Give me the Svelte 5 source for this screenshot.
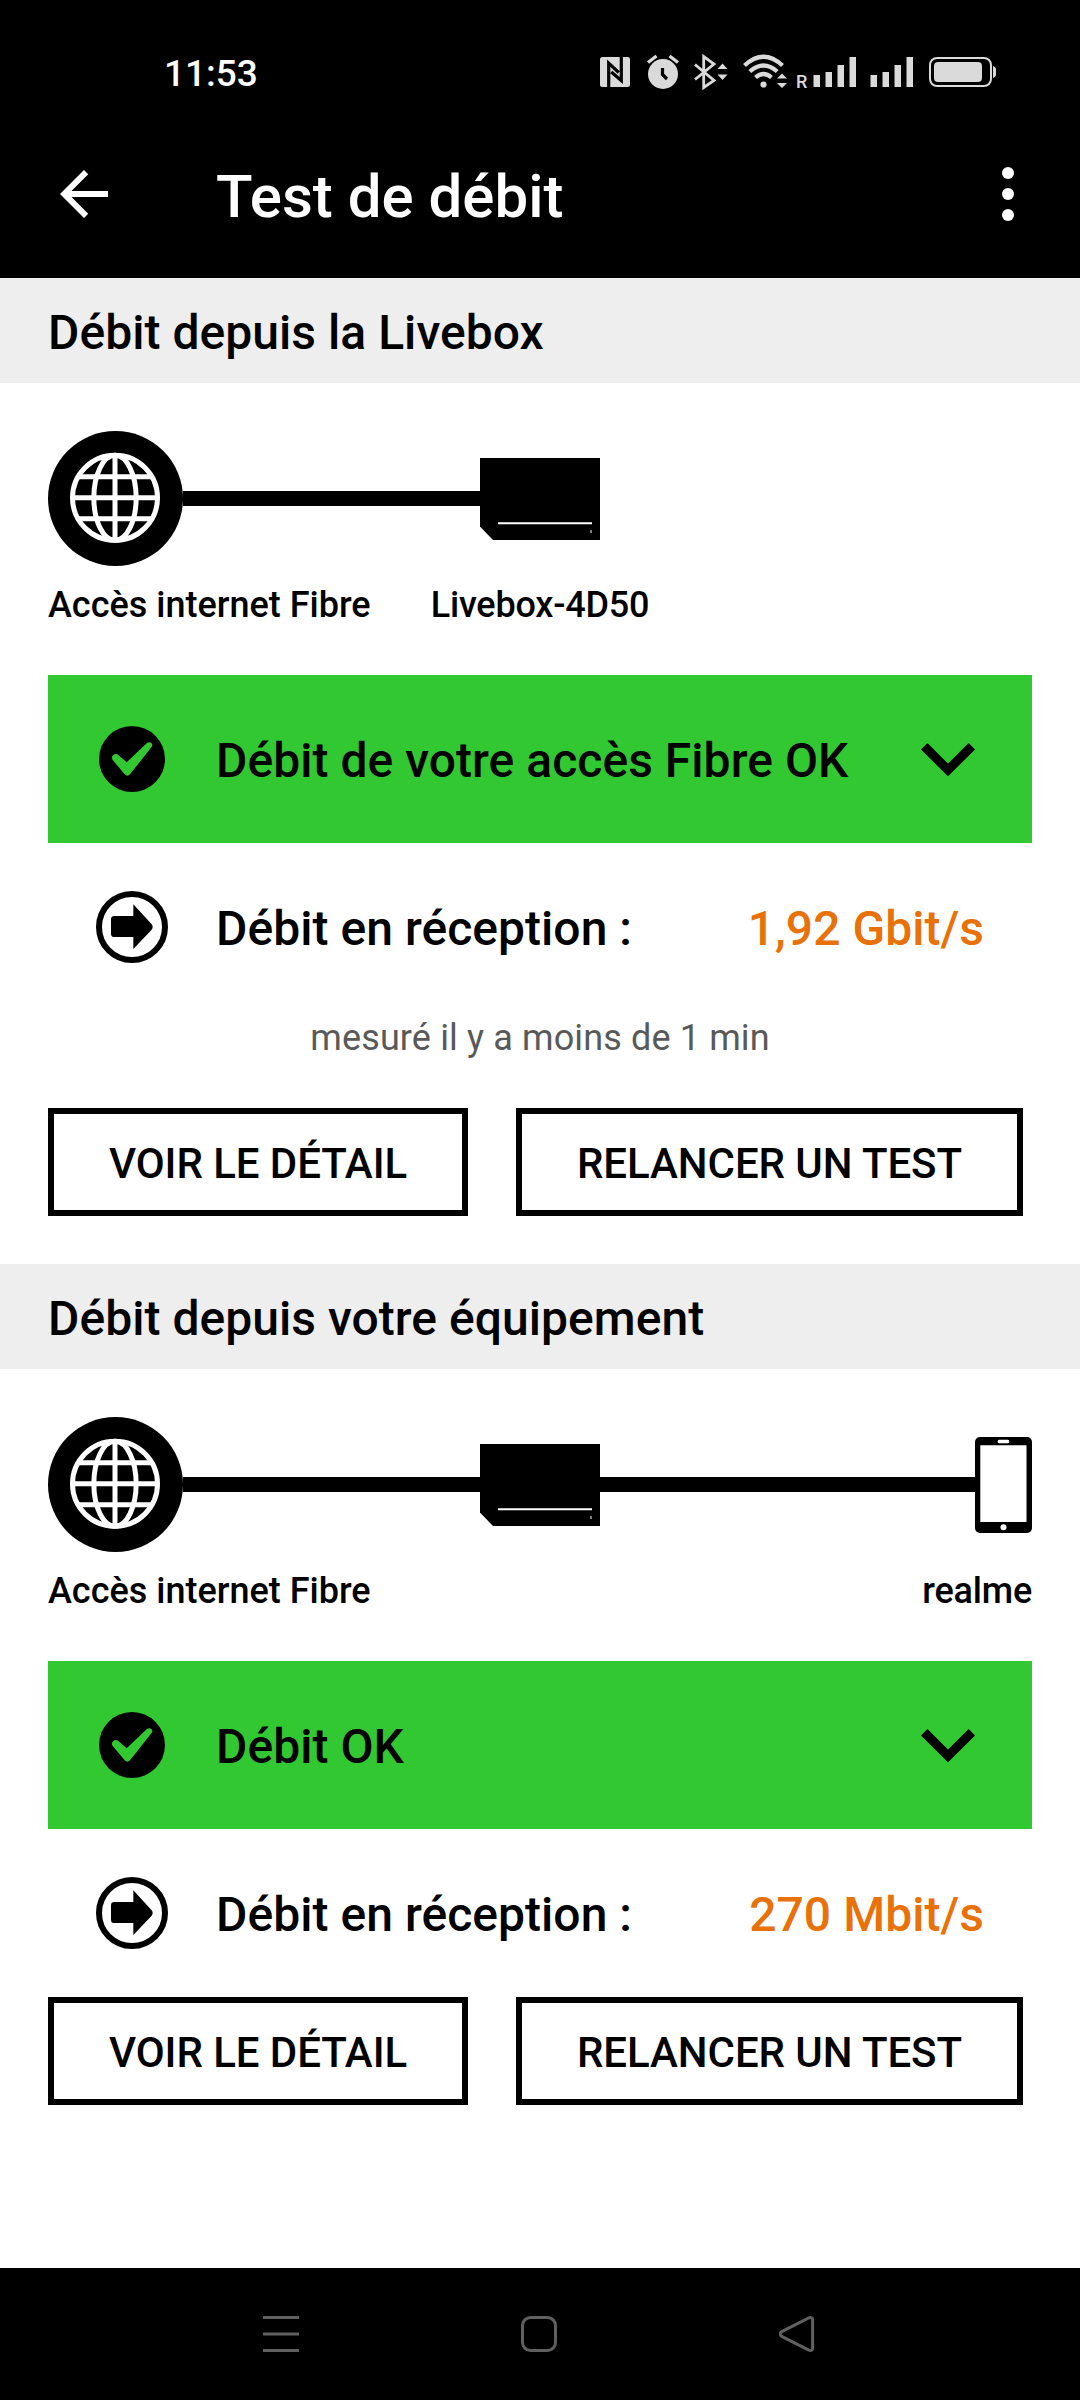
<script>
  const tests = [
    {
      title: 'Débit depuis la Livebox',
      box: 'Livebox-4D50',
      device: '',
      status: 'Débit de votre accès Fibre OK',
      speed: '1,92 Gbit/s',
      measured: 'mesuré il y a moins de 1 min'
    },
    {
      title: 'Débit depuis votre équipement',
      box: '',
      device: 'realme',
      status: 'Débit OK',
      speed: '270 Mbit/s',
      measured: ''
    }
  ];
</script>

<div class="screen">
  <header>
    <div class="status-bar">
      <span class="time">11:53</span>
      <div class="status-icons">
        <!-- nfc -->
        <svg width="44" height="40" viewBox="16 12 44 40">
          <rect x="20" y="17" width="30" height="30" rx="2.5" />
          <path class="cut" d="M28.7 47V23.2l10 9.3M41.3 17v23.5l-10-8.5" />
        </svg>
        <!-- alarm -->
        <svg width="48" height="40" viewBox="60 12 48 40">
          <circle cx="83" cy="34" r="15" />
          <path class="line" stroke-width="3.4" d="M68 22.5l8.5-6.5M98 22.5L89.5 16" />
          <path class="cut" stroke-width="3" d="M82.500 28v6.500l4.500 4.500" />
        </svg>
        <!-- bluetooth -->
        <svg width="50" height="40" viewBox="108 12 50 40">
          <path class="line" stroke-width="2.8" d="M115 24.500l19 16-10.300 7V16.500l10.300 7.500-19 15.500" />
          <path d="M137.500 29l5-5.500 5 5.500zM137.500 34.500h10l-5 5.500z" />
        </svg>
        <!-- wifi -->
        <svg width="54" height="40" viewBox="158 12 54 40">
          <path class="line" stroke-width="4.2" d="M164.500 25.500q19-17.500 38 0M169.800 31.500q13.700-12 27.400 0M175.500 37.500q8-7 16 0" />
          <circle cx="183.500" cy="44.500" r="3.100" />
          <path d="M197 38.500l5-5 5 5zM197 43h10l-5 5z" />
        </svg>
        <!-- mobile signal, roaming -->
        <svg width="70" height="40" viewBox="212 12 70 40">
          <text x="216" y="48">R</text>
          <path d="M233.500 35h6.500v12h-6.500zM245.500 32h6.500v15h-6.500zM257.500 25h6.500v22h-6.500zM269.500 17h6.500v30h-6.500z" />
        </svg>
        <svg width="58" height="40" viewBox="282 12 58 40">
          <path d="M290.500 35h6.500v12h-6.500zM302.500 32h6.500v15h-6.500zM314.500 25h6.500v22h-6.500zM326.500 17h6.500v30h-6.500z" />
        </svg>
        <!-- battery -->
        <svg width="80" height="40" viewBox="340 12 80 40">
          <rect class="line" stroke-width="2" x="350" y="18" width="61" height="28" rx="7" />
          <rect x="354" y="22" width="48" height="20" rx="4" />
          <path d="M413 26q3 1 3 3v6q0 2-3 3z" />
        </svg>
      </div>
    </div>

    <div class="app-bar">
      <svg width="72" height="72" viewBox="0 0 24 24" fill="#fff">
        <path d="M20 11H7.830l5.590-5.590L12 4l-8 8 8 8 1.410-1.410L7.830 13H20v-2z" />
      </svg>
      <h1>Test de débit</h1>
      <svg width="12" height="54" viewBox="0 0 12 54" fill="#fff">
        <circle cx="6" cy="6" r="6" />
        <circle cx="6" cy="27" r="6" />
        <circle cx="6" cy="48" r="6" />
      </svg>
    </div>
  </header>

  <main>
    {#each tests as test}
      <section>
        <h2>{test.title}</h2>
        <div class="content">
          <div class="diagram">
            <svg width="135" height="135" viewBox="0 0 405 405">
              <circle cx="202.500" cy="202.500" r="202.500" />
              <g fill="none" stroke="#fff" stroke-width="15">
                <circle cx="201" cy="200.500" r="127.500" />
                <ellipse cx="201" cy="200.500" rx="63.500" ry="127.500" />
                <path d="M201 73v255M74 200.500h254M92 137.500h218M92 263.500h218" />
              </g>
            </svg>
            <div class="link"></div>
            <svg width="120" height="82" viewBox="0 0 120 82">
              <path d="M0 0h120v82H13L0 68.500z" />
              <path d="M18 65.300h94" stroke="#fff" stroke-width="2" />
              <path d="M110.500 72h1v3h-1z" fill="#fff" />
            </svg>
            {#if test.device}
              <div class="link"></div>
              <svg width="57" height="96" viewBox="0 0 57 96">
                <rect width="57" height="96" rx="5" />
                <path d="M5.300 8.300h46.200v76.700H5.300z" fill="#fff" />
                <rect x="22.700" y="2.700" width="11.600" height="3.600" rx="1.500" fill="#fff" />
                <circle cx="28.500" cy="90.300" r="3" fill="#fff" />
              </svg>
            {:else}
              <div class="no-link"></div>
            {/if}
          </div>
          <div class="labels">
            <span>Accès internet Fibre</span>
            <span class="box">{test.box}</span>
            <span class="device">{test.device}</span>
          </div>

          <div class="banner">
            <svg width="66" height="66" viewBox="0 0 198 198">
              <circle cx="99" cy="99" r="99" />
              <path
                d="M41 102Q36 94 42 88q8-7 16-1l25 22 60-57q8-6 14-1 6 5 0 13L93 145q-8 8-16 0z"
                fill="#32c832"
              />
            </svg>
            <span class="text">{test.status}</span>
            <svg class="chevron" width="54" height="34" viewBox="0 0 54 34">
              <path d="M3.200 3.200L27 27 50.800 3.200" fill="none" stroke="#000" stroke-width="9" />
            </svg>
          </div>

          <div class="result">
            <svg width="72" height="72" viewBox="0 0 216 216">
              <circle cx="108" cy="108" r="99" fill="none" stroke="#000" stroke-width="18" />
              <path d="M55 75h57V40l55 60q6 8 0 16l-55 58v-36H55q-10 0-10-10V85q0-10 10-10z" />
            </svg>
            <span class="text">Débit en réception :</span>
            <span class="speed">{test.speed}</span>
          </div>

          {#if test.measured}
            <p>{test.measured}</p>
          {/if}

          <div class="buttons">
            <button class="detail">VOIR LE DÉTAIL</button>
            <button class="retry">RELANCER UN TEST</button>
          </div>
        </div>
      </section>
    {/each}
  </main>

  <nav>
    <svg width="36" height="36" viewBox="0 0 36 36">
      <path d="M0 1.500h36M0 18h36M0 34.500h36" />
    </svg>
    <svg width="36" height="36" viewBox="0 0 36 36">
      <rect x="1.500" y="1.500" width="33" height="33" rx="8" />
    </svg>
    <svg width="36" height="36" viewBox="0 0 36 36">
      <path d="M2.700 15.600L29.800 1.900Q33.600 0.500 33.600 4v28q0 3.500-3.800 2.100L2.700 20.400q-3-2.400 0-4.800z" />
    </svg>
  </nav>
</div>

<style>
  :global(body) {
    margin: 0;
    background: #fff;
  }

  .screen {
    width: 1080px;
    height: 2400px;
    display: flex;
    flex-direction: column;
    font-family: Roboto, 'Liberation Sans', sans-serif;
    font-weight: 500;
    color: #000;
    background: #fff;
  }

  svg {
    display: block;
    flex: none;
  }

  header {
    height: 278px;
    background: #000;
    color: #fff;
  }

  .status-bar {
    display: flex;
    align-items: center;
    justify-content: space-between;
    height: 92px;
    padding: 26px 80px 0 164px;
  }

  .time {
    padding-top: 3px;
    font-size: 37px;
    line-height: 44px;
  }

  .status-icons {
    display: flex;
    fill: #dadada;
  }

  .status-icons .line {
    fill: none;
    stroke: #dadada;
  }

  .status-icons .cut {
    fill: none;
    stroke: #000;
    stroke-width: 3.2;
  }

  .status-icons text {
    font-size: 18px;
  }

  .app-bar {
    display: flex;
    align-items: center;
    height: 152px;
    padding: 0 66px 0 48px;
  }

  h1 {
    flex: 1;
    margin: 0;
    padding: 5px 0 0 96px;
    font-size: 60px;
    line-height: 72px;
    font-weight: 500;
  }

  main {
    flex: 1;
  }

  h2 {
    margin: 0;
    padding: 4px 48px 0;
    height: 101px;
    line-height: 101px;
    font-size: 48px;
    font-weight: 500;
    letter-spacing: 0.04px;
    background: #eee;
  }

  .content {
    padding: 48px;
  }

  .diagram {
    display: flex;
    align-items: center;
    height: 135px;
  }

  .link {
    height: 15px;
    flex: 297 0 0;
    background: #000;
  }

  .link ~ .link {
    flex-grow: 375;
  }

  .no-link {
    flex: 432 0 0;
  }

  .labels {
    display: grid;
    grid-template-columns: 1fr auto 1fr;
    margin-top: 18px;
    height: 42px;
    line-height: 42px;
    font-size: 36px;
  }

  .box,
  .device {
    letter-spacing: -0.2px;
  }

  .device {
    text-align: right;
  }

  .banner,
  .result {
    display: flex;
    align-items: center;
    height: 168px;
    font-size: 48px;
    line-height: 56px;
    letter-spacing: 0.04px;
  }

  .banner {
    margin-top: 49px;
    padding: 0 57px 0 51px;
    box-sizing: border-box;
    background: #32c832;
  }

  .chevron {
    padding-top: 2px;
  }

  .result {
    padding: 0 48px;
  }

  .text {
    flex: 1;
    padding: 3px 0 0 48px;
  }

  .banner .text {
    padding-left: 51px;
  }

  .speed {
    padding-top: 3px;
    color: #e8710a;
  }

  p {
    margin: 0;
    padding: 6px 0 49px;
    text-align: center;
    font-size: 36px;
    line-height: 42px;
    font-weight: 400;
    letter-spacing: 0.13px;
    color: #595959;
  }

  .buttons {
    display: flex;
    gap: 48px;
  }

  button {
    height: 108px;
    padding: 3px 0 0;
    border: 6px solid #000;
    background: #fff;
    color: #000;
    font: inherit;
    font-size: 42px;
    letter-spacing: -0.06px;
  }

  .detail {
    width: 420px;
  }

  .retry {
    width: 507px;
  }

  nav {
    display: flex;
    align-items: center;
    justify-content: space-between;
    height: 132px;
    padding: 0 265px 0 263px;
    background: #000;
    fill: none;
    stroke: #606060;
    stroke-width: 3;
  }
</style>
